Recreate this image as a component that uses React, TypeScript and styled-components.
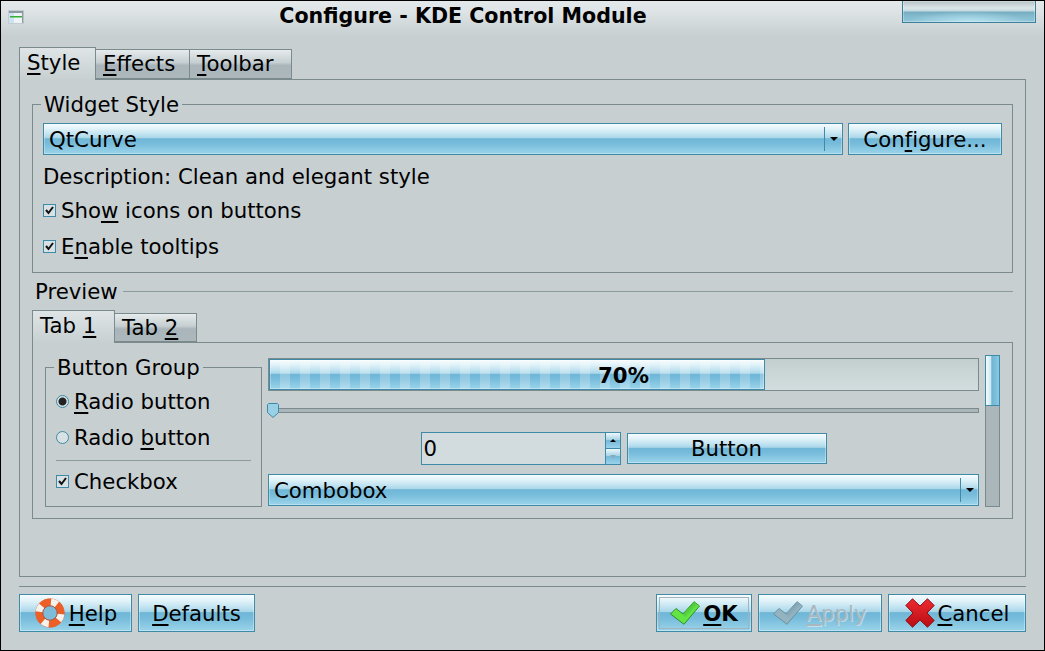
import React from "react";
import styled, { createGlobalStyle } from "styled-components";

const GlobalStyle = createGlobalStyle`
    html, body {
        margin: 0;
        padding: 0;
        background: #c7cfd1;
    }
    body {
        font-family: "DejaVu Sans", sans-serif;
        font-size: 21.25px;
        color: #000;
    }
`;

const GLOSS = `linear-gradient(to bottom, #f6fcfe 0%, #e2f3f9 15%, #bfe2f0 35%, #a9d6e8 46%, #6fb6d7 49%, #77bcdb 65%, #9bd4ea 100%)`;

const CheckMark = () => (
    <svg width="11" height="11" viewBox="0 0 11 11">
        <path d="M2 5 L4.5 8 L9 2" fill="none" stroke="#111" strokeWidth="2" />
    </svg>
);

const TickIcon = ({ id, light, dark, edge }: { id: string; light: string; dark: string; edge: string }) => (
    <svg width="30" height="24" viewBox="0 0 30 24">
        <defs>
            <linearGradient id={id} x1="0" y1="0" x2="1" y2="1">
                <stop offset="0" stopColor={dark} />
                <stop offset="0.6" stopColor={light} />
            </linearGradient>
        </defs>
        <path d="M0.5 13 L6 7.5 L13 13 L24 0.7 L29.5 5 L14 23.3 Z" fill={light} stroke={edge} />
        <path d="M13 13 L24 0.7 L29 5 L15 17 Z" fill={`url(#${id})`} />
    </svg>
);

const App = () => {
    return (
        <Window>
            <GlobalStyle />
            <TitleBar>
                <WindowIcon width="16" height="14" viewBox="0 0 16 14">
                    <rect x="0.5" y="0.5" width="15" height="13" fill="#eef3f4" stroke="#c3cdd1" />
                    <rect x="1" y="1" width="5" height="12" fill="#cfe2f3" />
                    <rect x="1" y="1" width="14" height="2" fill="#8b9aa2" />
                    <rect x="2" y="6" width="12" height="1.5" fill="#35b035" />
                    <rect x="14" y="1" width="1.2" height="12" fill="#8b9aa2" />
                </WindowIcon>
                <Title>Configure - KDE Control Module</Title>
                <CornerButton />
            </TitleBar>

            <Body>
                <TabRow>
                    <Tab $active $width={77}><u>S</u>tyle</Tab>
                    <Tab $width={95}><u>E</u>ffects</Tab>
                    <Tab $width={103}><u>T</u>oolbar</Tab>
                </TabRow>
                <MainPanel>
                    <WidgetGroup>
                        <legend>Widget Style</legend>
                        <ComboRow>
                            <Combo $grow>
                                QtCurve
                                <ComboArrow />
                            </Combo>
                            <ConfigureButton>Con<u>f</u>igure...</ConfigureButton>
                        </ComboRow>
                        <Description>Description: Clean and elegant style</Description>
                        <CheckRow>
                            <CheckBox><CheckMark /></CheckBox>
                            <span>Sho<u>w</u> icons on buttons</span>
                        </CheckRow>
                        <CheckRow>
                            <CheckBox><CheckMark /></CheckBox>
                            <span>E<u>n</u>able tooltips</span>
                        </CheckRow>
                    </WidgetGroup>

                    <PreviewHeading>
                        <span>Preview</span>
                        <HeadingLine />
                    </PreviewHeading>

                    <SmallTabRow>
                        <SmallTab $active $width={83}>Tab <u>1</u></SmallTab>
                        <SmallTab $width={83}>Tab <u>2</u></SmallTab>
                    </SmallTabRow>
                    <PreviewPanel>
                        <ButtonGroup>
                            <legend>Button Group</legend>
                            <RadioRow>
                                <Radio $checked />
                                <span><u>R</u>adio button</span>
                            </RadioRow>
                            <RadioRow>
                                <Radio />
                                <span>Radio <u>b</u>utton</span>
                            </RadioRow>
                            <GroupDivider />
                            <RadioRow>
                                <CheckBox><CheckMark /></CheckBox>
                                <span>Checkbox</span>
                            </RadioRow>
                        </ButtonGroup>

                        <PreviewControls>
                            <Progress>
                                <ProgressFill style={{ width: "70%" }} />
                                <ProgressLabel>70%</ProgressLabel>
                            </Progress>
                            <SliderTrack>
                                <svg width="12" height="15" viewBox="0 0 12 15">
                                    <path
                                        d="M1.5 0.5 H10.5 L11.5 1.5 V9.5 L6 14.5 L0.5 9.5 V1.5 Z"
                                        fill="#9ad0e6"
                                        stroke="#3f8aa6"
                                    />
                                </svg>
                            </SliderTrack>
                            <SpinRow>
                                <SpinBox>
                                    <SpinValue>0</SpinValue>
                                    <SpinButtons>
                                        <SpinButton><SpinArrow /></SpinButton>
                                        <SpinButton><SpinArrow $down /></SpinButton>
                                    </SpinButtons>
                                </SpinBox>
                                <PlainButton>Button</PlainButton>
                            </SpinRow>
                            <PreviewCombo>
                                Combobox
                                <ComboArrow />
                            </PreviewCombo>
                        </PreviewControls>

                        <ScrollBar>
                            <ScrollThumb />
                        </ScrollBar>
                    </PreviewPanel>
                </MainPanel>
            </Body>

            <FooterLine />
            <Footer>
                <DialogButton $width={113}>
                    <svg width="32" height="32" viewBox="0 0 32 32">
                        <circle cx="16" cy="16" r="14.6" fill="#b8522c" opacity="0.55" />
                        <circle cx="16" cy="16" r="11" fill="none" stroke="#ee5f28" strokeWidth="7" />
                        <circle
                            cx="16"
                            cy="16"
                            r="11"
                            fill="none"
                            stroke="#f6f3ee"
                            strokeWidth="7"
                            strokeDasharray="6.5 10.78"
                            transform="rotate(-85 16 16)"
                        />
                        <circle cx="16" cy="16" r="7.2" fill="#7fbcd9" stroke="#a8441f" strokeWidth="0.8" />
                    </svg>
                    <span><u>H</u>elp</span>
                </DialogButton>
                <DialogButton $width={117}>
                    <span><u>D</u>efaults</span>
                </DialogButton>
                <FooterSpacer />
                <DialogButton $width={96} $default>
                    <TickIcon id="okTick" light="#62e444" dark="#2c8f2a" edge="#2f8f2a" />
                    <strong><u>O</u>K</strong>
                </DialogButton>
                <DialogButton $width={124} $disabled>
                    <TickIcon id="applyTick" light="#93b3c0" dark="#64899a" edge="#6d929f" />
                    <span><u>A</u>pply</span>
                </DialogButton>
                <DialogButton $width={138}>
                    <svg width="30" height="30" viewBox="0 0 30 30">
                        <defs>
                            <linearGradient id="cancelRed" x1="0" y1="0" x2="0" y2="1">
                                <stop offset="0" stopColor="#ee2a30" />
                                <stop offset="1" stopColor="#b80d14" />
                            </linearGradient>
                        </defs>
                        <path
                            d="M7.5 0.8 L15 8 L22.5 0.8 L29.2 7.5 L22 15 L29.2 22.5 L22.5 29.2 L15 22 L7.5 29.2 L0.8 22.5 L8 15 L0.8 7.5 Z"
                            fill="url(#cancelRed)"
                            stroke="#8c0f14"
                            strokeWidth="1"
                            strokeLinejoin="round"
                        />
                    </svg>
                    <span><u>C</u>ancel</span>
                </DialogButton>
            </Footer>
        </Window>
    );
};

export default App;

const Window = styled.div`
    box-sizing: border-box;
    width: 1045px;
    height: 651px;
    display: flex;
    flex-direction: column;
    overflow: hidden;
    border: 1px solid #000;
    background: #c7cfd1;

    u {
        text-decoration-thickness: 2px;
        text-underline-offset: 3px;
    }

    legend {
        padding: 1px 3px 0;
        margin-left: -2px;
        line-height: 23px;
    }
`;

const TitleBar = styled.div`
    height: 46px;
    display: flex;
    align-items: flex-start;
    padding: 0 8px 0 7px;
    background: linear-gradient(to bottom, #e3e8ea 0, #dde3e5 12px, #c7cfd1 35px);
`;

const WindowIcon = styled.svg`
    flex-shrink: 0;
    margin-top: 9px;
`;

const Title = styled.div`
    flex: 1;
    text-align: center;
    font-size: 20.6px;
    font-weight: bold;
    line-height: 30px;
`;

const CornerButton = styled.div`
    box-sizing: border-box;
    flex-shrink: 0;
    width: 134px;
    height: 23px;
    margin-top: -1px;
    border: 1px solid #3f7f98;
    box-shadow: inset 0 0 0 1px rgba(235, 245, 248, 0.35);
    background:
        radial-gradient(ellipse 60px 11px at 50% 100%, rgba(190, 232, 246, 0.85), transparent),
        linear-gradient(to bottom, #b4c0c4 0, #dbe6e9 7px, #c4d8df 10px, #76adc1 11px, #85bccf 16px, #94c8da 22px);
`;

const Body = styled.div`
    display: flex;
    flex-direction: column;
    padding: 0 18px;
`;

const TabRow = styled.div`
    display: flex;
    align-items: flex-end;
    height: 32px;
`;

const Tab = styled.div<{ $active?: boolean; $width: number }>`
    box-sizing: border-box;
    width: ${(p) => p.$width}px;
    height: ${(p) => (p.$active ? 33 : 30)}px;
    margin-bottom: ${(p) => (p.$active ? -1 : 0)}px;
    padding-left: 7px;
    line-height: ${(p) => (p.$active ? 29 : 28)}px;
    border: 1px solid #7b8a8c;
    border-bottom: ${(p) => (p.$active ? "none" : "1px solid #7b8a8c")};
    margin-right: -1px;
    background: ${(p) =>
        p.$active
            ? "linear-gradient(to bottom, #dfe5e7, #c7cfd1)"
            : "linear-gradient(to bottom, #e6ebec 0, #c5ced1 45%, #a9b5ba 55%, #acb8bc 100%)"};
    position: relative;
    z-index: ${(p) => (p.$active ? 1 : 0)};
`;

const MainPanel = styled.div`
    box-sizing: border-box;
    height: 498px;
    padding: 12px 12px 0;
    border: 1px solid #7b8a8c;
`;

const WidgetGroup = styled.fieldset`
    box-sizing: border-box;
    height: 181px;
    margin: 0;
    padding: 7px 10px 0;
    border: 1px solid #7b8a8c;
`;

const ComboRow = styled.div`
    display: flex;
    gap: 5px;
`;

const Combo = styled.div<{ $grow?: boolean }>`
    box-sizing: border-box;
    height: 32px;
    display: flex;
    align-items: center;
    justify-content: space-between;
    padding-left: 5px;
    ${(p) => (p.$grow ? "flex: 1;" : "")}
    border: 1px solid #3f8aa6;
    box-shadow: inset 0 0 0 1px rgba(255, 255, 255, 0.3);
    background: ${GLOSS};
`;

const PreviewCombo = styled(Combo)`
    margin-top: 9px;
`;

const ComboArrow = styled.div`
    box-sizing: border-box;
    width: 18px;
    height: 24px;
    border-left: 1px solid #3f8aa6;
    display: flex;
    align-items: center;
    justify-content: center;

    &::after {
        content: "";
        border: 4px solid transparent;
        border-top: 4px solid #000;
        border-bottom: none;
    }
`;

const BlueButton = styled.div`
    box-sizing: border-box;
    display: flex;
    align-items: center;
    justify-content: center;
    border: 1px solid #3f8aa6;
    box-shadow: inset 0 0 0 1px rgba(255, 255, 255, 0.35);
    background: ${GLOSS};
`;

const ConfigureButton = styled(BlueButton)`
    width: 154px;
    height: 32px;
`;

const Description = styled.div`
    height: 24px;
    line-height: 24px;
    margin: 10px 0 -3px;
`;

const CheckRow = styled.div`
    display: flex;
    align-items: center;
    gap: 5px;
    height: 24px;
    margin-top: 12px;
`;

const CheckBox = styled.div`
    box-sizing: border-box;
    width: 13px;
    height: 13px;
    flex-shrink: 0;
    display: flex;
    align-items: center;
    justify-content: center;
    border: 1px solid #3f8aa6;
    background: #d8e1e3;
`;

const PreviewHeading = styled.div`
    display: flex;
    align-items: center;
    gap: 5px;
    height: 24px;
    margin-top: 6px;
    padding-left: 3px;
`;

const HeadingLine = styled.div`
    flex: 1;
    height: 1px;
    background: #8d9b9d;
`;

const SmallTabRow = styled.div`
    display: flex;
    align-items: flex-end;
    height: 32px;
    margin-top: 7px;
`;

const SmallTab = styled(Tab)`
    height: ${(p) => (p.$active ? 33 : 29)}px;
    line-height: ${(p) => (p.$active ? 30 : 27)}px;
`;

const PreviewPanel = styled.div`
    box-sizing: border-box;
    height: 177px;
    display: flex;
    gap: 6px;
    padding: 12px 12px 0;
    border: 1px solid #7b8a8c;
`;

const ButtonGroup = styled.fieldset`
    box-sizing: border-box;
    width: 217px;
    height: 152px;
    flex-shrink: 0;
    margin: 0;
    padding: 10px 10px 0;
    border: 1px solid #7b8a8c;
`;

const RadioRow = styled.div`
    display: flex;
    align-items: center;
    gap: 5px;
    height: 24px;
    margin-bottom: 12px;
`;

const Radio = styled.div<{ $checked?: boolean }>`
    box-sizing: border-box;
    width: 13px;
    height: 13px;
    flex-shrink: 0;
    border: 1px solid #3f8aa6;
    border-radius: 50%;
    background: ${(p) =>
        p.$checked ? "radial-gradient(circle, #222 0 3.5px, #d8e1e3 4.5px)" : "#d8e1e3"};
`;

const GroupDivider = styled.div`
    height: 1px;
    margin: -1px 0 8px;
    background: #8d9b9d;
`;

const PreviewControls = styled.div`
    flex: 1;
    display: flex;
    flex-direction: column;
    padding-top: 3px;
`;

const Progress = styled.div`
    box-sizing: border-box;
    position: relative;
    height: 33px;
    border: 1px solid #7b8a8c;
    background: linear-gradient(to bottom, #c3cfcd, #d3dddf);
`;

const ProgressFill = styled.div`
    box-sizing: border-box;
    height: 100%;
    border: 1px solid #3f8aa6;
    box-shadow: inset 0 0 0 1px rgba(255, 255, 255, 0.3);
    background:
        repeating-linear-gradient(to right, transparent 0 10px, rgba(255, 255, 255, 0.22) 10px 20px),
        ${GLOSS};
`;

const ProgressLabel = styled.div`
    position: absolute;
    inset: 0;
    display: flex;
    align-items: center;
    justify-content: center;
    padding-top: 1px;
    font-weight: bold;
`;

const SliderTrack = styled.div`
    box-sizing: border-box;
    height: 5px;
    margin-top: 17px;
    display: flex;
    align-items: center;
    border: 1px solid #7b8a8c;
    background: #aab6ba;

    svg {
        flex-shrink: 0;
        margin-left: -2px;
    }
`;

const SpinRow = styled.div`
    display: flex;
    align-items: center;
    justify-content: center;
    gap: 6px;
    margin-top: 19px;
    height: 33px;
`;

const SpinBox = styled.div`
    box-sizing: border-box;
    width: 200px;
    height: 33px;
    display: flex;
    border: 1px solid #3f8aa6;
    background: #d2dcdf;
`;

const SpinValue = styled.div`
    flex: 1;
    padding-left: 2px;
    line-height: 31px;
`;

const SpinButtons = styled.div`
    width: 14px;
    display: flex;
    flex-direction: column;
    border-left: 1px solid #3f8aa6;
`;

const SpinButton = styled.div`
    flex: 1;
    display: flex;
    align-items: center;
    justify-content: center;
    background: linear-gradient(to bottom, #eef8fb, #a6d4e7 45%, #74b9d9 50%, #9ad3ea);

    & + & {
        border-top: 1px solid #3f8aa6;
    }
`;

const SpinArrow = styled.div<{ $down?: boolean }>`
    border: 3px solid transparent;
    ${(p) =>
        p.$down
            ? "border-top: 3px solid #8fa9b4; border-bottom: none;"
            : "border-bottom: 3px solid #000; border-top: none;"}
`;

const PlainButton = styled(BlueButton)`
    width: 200px;
    height: 31px;
`;

const ScrollBar = styled.div`
    box-sizing: border-box;
    width: 15px;
    height: 152px;
    flex-shrink: 0;
    border: 1px solid #7b8a8c;
    background: #aab6ba;
`;

const ScrollThumb = styled.div`
    box-sizing: border-box;
    height: 51px;
    margin: -1px;
    border: 1px solid #3f8aa6;
    background: linear-gradient(to right, #f4fbfd 0, #cfe9f3 35%, #6db4d5 45%, #8cc8e2 100%);
`;

const FooterLine = styled.div`
    height: 1px;
    margin: 9px 18px 7px;
    background: #7b8a8c;
`;

const Footer = styled.div`
    display: flex;
    gap: 6px;
    padding: 0 18px;
`;

const FooterSpacer = styled.div`
    flex: 1;
`;

const DialogButton = styled(BlueButton)<{ $width: number; $disabled?: boolean; $default?: boolean }>`
    width: ${(p) => p.$width}px;
    height: 38px;
    gap: 3px;
    color: ${(p) => (p.$disabled ? "#a9b8bf" : "#000")};
    ${(p) => (p.$disabled ? "text-shadow: 1px 1px 0 rgba(235, 245, 248, 0.5);" : "")}
    ${(p) => (p.$default ? "outline: 1px solid #a5b3b8; outline-offset: -4px;" : "")}
`;
